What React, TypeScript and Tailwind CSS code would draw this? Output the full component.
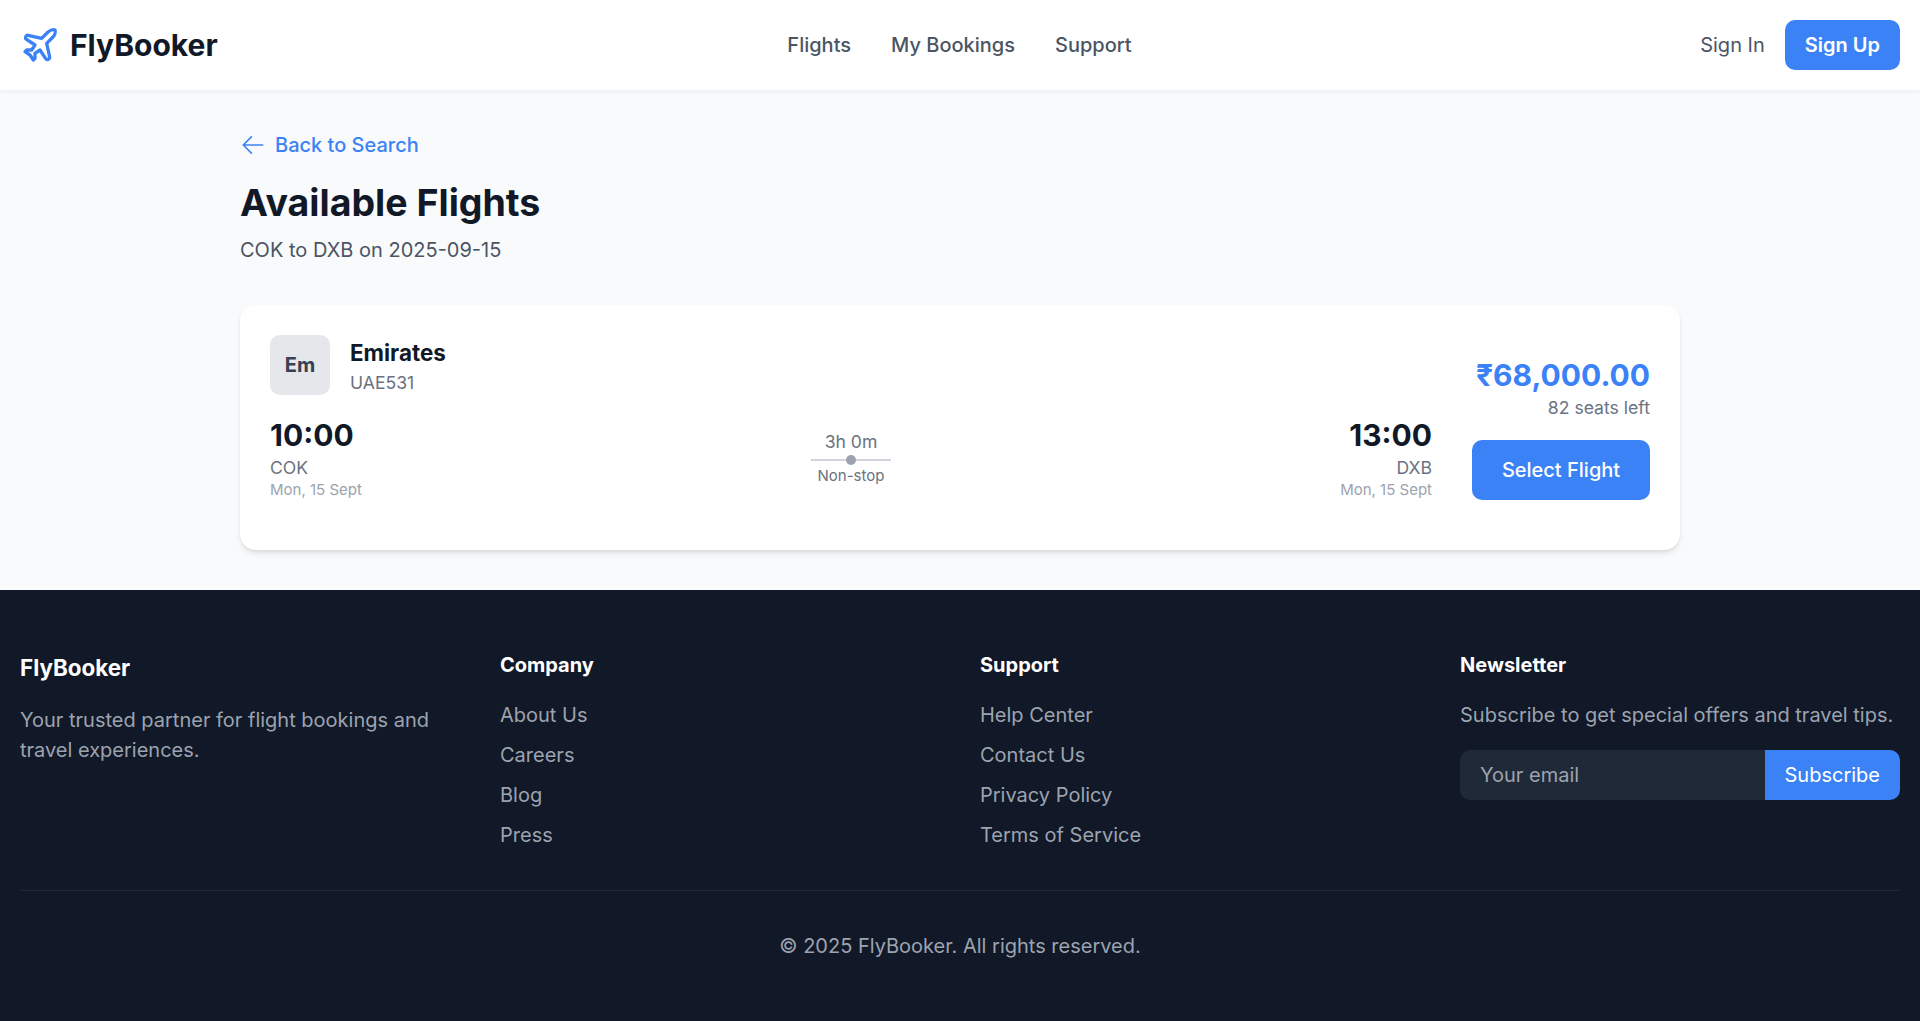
import { Plane } from "lucide-react";

function LinkColumn({ title, links }: { title: string; links: string[] }) {
  return (
    <div>
      <h4 className="text-[20px] leading-[28px] font-bold text-white mb-[22px] mt-[1px]">{title}</h4>
      <ul className="flex flex-col gap-[12px]">
        {links.map((l) => (
          <li key={l} className="text-[20px] leading-[28px] text-[#9ca3af]">{l}</li>
        ))}
      </ul>
    </div>
  );
}

function Endpoint({ time, code, right }: { time: string; code: string; right?: boolean }) {
  return (
    <div className={right ? "text-right" : ""}>
      <div className="text-[30px] leading-[36px] font-bold text-[#111827]">{time}</div>
      <div className="text-[17.6px] leading-[24px] text-[#6b7280] mt-[3px]">{code}</div>
      <div className="text-[15px] leading-[20px] text-[#9ca3af]">Mon, 15 Sept</div>
    </div>
  );
}

export default function App() {
  return (
    <div className="min-h-[1021px] flex flex-col bg-[#f9fafb] font-['Inter',sans-serif]">
      <header className="h-[90px] bg-white shadow-[0_2px_4px_rgba(0,0,0,0.05)] flex items-center justify-between px-5 relative">
        <div className="flex items-center gap-[10px] w-[400px]">
          <Plane size={40} className="text-[#3b82f6]" strokeWidth={2} />
          <span className="text-[30px] leading-none font-bold text-[#111827]">FlyBooker</span>
        </div>
        <nav className="flex items-center gap-[40px] mr-[1px] text-[20px] font-medium text-[#4b5563]">
          <span>Flights</span>
          <span>My Bookings</span>
          <span>Support</span>
        </nav>
        <div className="flex items-center justify-end gap-[20px] w-[400px]">
          <span className="text-[20px] font-normal text-[#4b5563]">Sign In</span>
          <span className="h-[50px] px-[20px] flex items-center rounded-[10px] bg-[#3b82f6] text-white text-[20px] font-semibold">Sign Up</span>
        </div>
      </header>
      <main className="h-[500px] flex justify-center">
        <div className="w-[1440px] pt-[41px]">
          <div className="flex items-center gap-[9px] text-[#3b82f6] text-[20px] font-medium h-[28px]">
            <svg width="26" height="26" viewBox="0 0 24 24" fill="none" stroke="currentColor" strokeWidth="1.5" strokeLinecap="round" strokeLinejoin="round"><path d="M10.5 19.5 3 12m0 0 7.5-7.5M3 12h18" /></svg>
            <span>Back to Search</span>
          </div>
          <h1 className="text-[37.5px] leading-[40px] font-bold text-[#111827] mt-[24px]">Available Flights</h1>
          <p className="text-[20px] leading-[28px] text-[#4b5563] mt-[13px]">COK to DXB on 2025-09-15</p>
          <div className="mt-[41px] h-[245px] bg-white rounded-[16px] shadow-md p-[30px] flex justify-between">
            <div className="flex-1 flex flex-col">
              <div className="flex items-start gap-[20px]">
                <div className="w-[60px] h-[60px] rounded-[10px] bg-[#e5e7eb] flex items-center justify-center text-[20px] font-bold text-[#374151]">Em</div>
                <div className="mt-[3px]">
                  <div className="text-[22.4px] leading-[30px] font-bold text-[#111827]">Emirates</div>
                  <div className="text-[17.6px] leading-[24px] text-[#6b7280] mt-[3px]">UAE531</div>
                </div>
              </div>
              <div className="flex items-start justify-between mt-[22px]">
                <Endpoint time="10:00" code="COK" />
                <div className="flex flex-col items-center mt-[13px]">
                  <div className="text-[17.6px] leading-[24px] text-[#6b7280]">3h 0m</div>
                  <div className="relative w-[80px] h-[2px] bg-[#d1d5db] mt-[5px]">
                    <div className="absolute left-[35px] -top-[4px] w-[10px] h-[10px] rounded-full bg-[#9ca3af]"></div>
                  </div>
                  <div className="text-[15px] leading-[20px] text-[#6b7280] mt-[5px]">Non-stop</div>
                </div>
                <Endpoint time="13:00" code="DXB" right />
              </div>
            </div>
            <div className="ml-[40px] flex flex-col items-end justify-end pb-[20px]">
              <div className="text-[30px] leading-[36px] font-bold text-[#3b82f6] mb-[3px]">₹68,000.00</div>
              <div className="text-[17.6px] leading-[24px] text-[#6b7280]">82 seats left</div>
              <div className="mt-[20px] w-[178px] h-[60px] rounded-[10px] bg-[#3b82f6] text-white text-[20px] font-medium flex items-center justify-center">Select Flight</div>
            </div>
          </div>
        </div>
      </main>
      <footer className="h-[431px] bg-[#111827] px-5 pt-[60px]">
        <div className="grid grid-cols-4 gap-[40px] h-[240px]">
          <div>
            <h3 className="text-[22.4px] leading-[32px] font-bold text-white mb-[21px] mt-[2px]">FlyBooker</h3>
            <p className="text-[20px] leading-[30px] text-[#9ca3af]">Your trusted partner for flight bookings and travel experiences.</p>
          </div>
          <LinkColumn title="Company" links={["About Us", "Careers", "Blog", "Press"]} />
          <LinkColumn title="Support" links={["Help Center", "Contact Us", "Privacy Policy", "Terms of Service"]} />
          <div>
            <h4 className="text-[20px] leading-[28px] font-bold text-white mb-[22px] mt-[1px]">Newsletter</h4>
            <p className="text-[20px] leading-[28px] text-[#9ca3af]">Subscribe to get special offers and travel tips.</p>
            <div className="flex mt-[21px] h-[50px]">
              <div className="flex-1 bg-[#1f2937] rounded-l-[10px] px-[20px] flex items-center text-[20px] text-[#9ca3af]">Your email</div>
              <div className="bg-[#3b82f6] rounded-r-[10px] px-[20px] flex items-center text-[20px] font-normal text-white">Subscribe</div>
            </div>
          </div>
        </div>
        <div className="border-t border-[#1f2937] pt-[41px] text-center text-[20px] leading-[28px] text-[#9ca3af]">© 2025 FlyBooker. All rights reserved.</div>
      </footer>
    </div>
  );
}
